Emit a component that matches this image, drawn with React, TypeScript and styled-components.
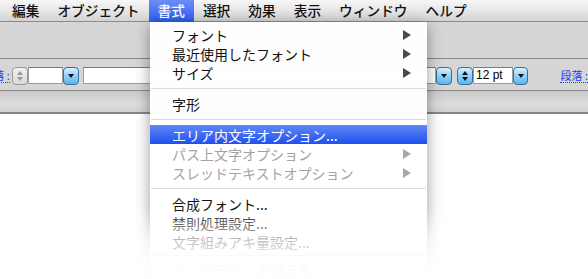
import React from 'react';
import styled, {createGlobalStyle} from "styled-components";

const GlobalStyle = createGlobalStyle`
    html, body {
        margin: 0;
        padding: 0;
        background: #ffffff;
    }
    body {
        font-family: "Noto Sans CJK JP", "Noto Sans", sans-serif;
    }
`

type Tone = "normal" | "disabled" | "active"

type MenuEntry = {
    label: string
    arrow?: boolean
    tone?: Tone
} | "sep" | "sep-short"

const menuBarItems = ["編集", "オブジェクト", "書式", "選択", "効果", "表示", "ウィンドウ", "ヘルプ"]

const typeMenu: MenuEntry[] = [
    {label: "フォント", arrow: true},
    {label: "最近使用したフォント", arrow: true},
    {label: "サイズ", arrow: true},
    "sep",
    {label: "字形"},
    "sep",
    {label: "エリア内文字オプション...", tone: "active"},
    {label: "パス上文字オプション", arrow: true, tone: "disabled"},
    {label: "スレッドテキストオプション", arrow: true, tone: "disabled"},
    "sep",
    {label: "合成フォント..."},
    {label: "禁則処理設定..."},
    {label: "文字組みアキ量設定..."},
    "sep-short",
    {label: "ヘッドラインを揃える"},
]

export default function App() {
    return (
        <Screen>
            <GlobalStyle/>
            <MenuBar>
                {menuBarItems.map(item => (
                    <MenuBarItem key={item} $open={item === "書式"}>{item}</MenuBarItem>
                ))}
            </MenuBar>
            <TopPanel/>
            <ControlRow>
                <ClippedLabel>
                    <LinkLabel>段落 :</LinkLabel>
                </ClippedLabel>
                <Stepper $active={false} $gap={2}><Up/><Down/></Stepper>
                <Field $width={36}/>
                <DropButton><Down/></DropButton>
                <Field $width={357} $gap={4}/>
                <DropButton><Down/></DropButton>
                <Stepper $active $gap={5}><Up/><Down/></Stepper>
                <Field $width={40}>12 pt</Field>
                <DropButton><Down/></DropButton>
                <LinkLabel $gap={32}>段落 :</LinkLabel>
            </ControlRow>
            <Band/>
            <Canvas/>

            <Dropdown>
                {typeMenu.map((entry, i) => {
                    if (entry === "sep") return <Separator key={i} $height={12}/>
                    if (entry === "sep-short") return <Separator key={i} $height={9}/>
                    const tone = entry.tone ?? "normal"
                    return (
                        <MenuRow key={i} $tone={tone}>
                            <span>{entry.label}</span>
                            {entry.arrow && <Arrow $tone={tone}/>}
                        </MenuRow>
                    )
                })}
            </Dropdown>
            <Fade/>
        </Screen>
    );
}

const Screen = styled.div`
    position: relative;
    width: 588px;
    height: 279px;
    overflow: hidden;
    background: #ffffff;
`

const MenuBar = styled.div`
    display: flex;
    height: 22px;
    padding-left: 3px;
    background: linear-gradient(#f7f7f7, #e6e6e6 50%, #d3d3d3);
    border-bottom: 1px solid #8c8c8c;
    box-sizing: border-box;
`

const MenuBarItem = styled.div<{ $open: boolean }>`
    padding: 0 9px;
    height: 22px;
    line-height: 21px;
    font-size: 13.7px;
    font-weight: 500;
    color: ${p => p.$open ? "#ffffff" : "#111111"};
    background: ${p => p.$open ? "linear-gradient(#6a8ff7, #2a5bf0)" : "transparent"};
`

const TopPanel = styled.div`
    height: 36px;
    background: #d6d6d6;
    border-bottom: 1px solid #8a8a8a;
`

const ControlRow = styled.div`
    display: flex;
    align-items: center;
    height: 32px;
    padding-top: 2px;
    box-sizing: border-box;
    background: #d6d6d6;
    border-bottom: 1px solid #8a8a8a;
`

const ClippedLabel = styled.div`
    display: flex;
    justify-content: flex-end;
    width: 10px;
    overflow: hidden;
`

const LinkLabel = styled.span<{ $gap?: number }>`
    flex: none;
    font-size: 11px;
    color: #1f3ff0;
    border-bottom: 1px dotted #1f3ff0;
    line-height: 13px;
    margin-left: ${p => p.$gap ?? 0}px;
    white-space: nowrap;
`

const Stepper = styled.div<{ $active: boolean, $gap?: number }>`
    display: flex;
    flex-direction: column;
    align-items: center;
    justify-content: center;
    gap: 2px;
    width: 16px;
    height: 18px;
    margin-left: ${p => p.$gap ?? 0}px;
    box-sizing: border-box;
    border: 1px solid ${p => p.$active ? "#3d6b9c" : "#9a9a9a"};
    border-radius: 4px;
    background: ${p => p.$active
            ? "linear-gradient(#d8f1ff, #8fd0f7 50%, #5bb6ee)"
            : "linear-gradient(#f2f2f2, #d9d9d9)"};
    color: ${p => p.$active ? "#111111" : "#9a9a9a"};
`

const Up = styled.span`
    width: 0;
    height: 0;
    border-left: 3px solid transparent;
    border-right: 3px solid transparent;
    border-bottom: 4px solid currentColor;
`

const Down = styled.span`
    width: 0;
    height: 0;
    border-left: 3px solid transparent;
    border-right: 3px solid transparent;
    border-top: 4px solid currentColor;
`

const Field = styled.div<{ $width: number, $gap?: number }>`
    width: ${p => p.$width}px;
    height: 17px;
    margin-left: ${p => p.$gap ?? 0}px;
    box-sizing: border-box;
    background: #ffffff;
    border: 1px solid #9c9c9c;
    border-top-color: #7a7a7a;
    font-family: "Liberation Sans", Arial, sans-serif;
    font-size: 12px;
    line-height: 15px;
    padding-left: 2px;
    color: #000000;
`

const DropButton = styled.div`
    display: flex;
    align-items: center;
    justify-content: center;
    width: 16px;
    height: 18px;
    box-sizing: border-box;
    border: 1px solid #3d6b9c;
    border-radius: 4px;
    background: linear-gradient(#d8f1ff, #8fd0f7 50%, #5bb6ee);
    color: #111111;
`

const Band = styled.div`
    height: 21px;
    background: linear-gradient(#c9c9c9, #dcdcdc 60%, #d2d2d2);
    border-bottom: 2px solid #858585;
`

const Canvas = styled.div`
    height: 200px;
    background: #ffffff;
`

const Dropdown = styled.div`
    position: absolute;
    top: 22px;
    left: 150px;
    width: 277px;
    padding-top: 3px;
    padding-bottom: 20px;
    background: rgba(255, 255, 255, 0.97);
    box-shadow: 0 4px 14px rgba(0, 0, 0, 0.4);
`

const MenuRow = styled.div<{ $tone: Tone }>`
    display: flex;
    align-items: center;
    justify-content: space-between;
    height: 19px;
    padding: 0 16px 0 22px;
    font-size: 14px;
    color: ${p => p.$tone === "active" ? "#ffffff" : p.$tone === "disabled" ? "#a3a3a3" : "#111111"};
    background: ${p => p.$tone === "active" ? "linear-gradient(#6288f6, #1f50ef)" : "transparent"};
`

const Arrow = styled.span<{ $tone: Tone }>`
    width: 0;
    height: 0;
    border-top: 5px solid transparent;
    border-bottom: 5px solid transparent;
    border-left: 8px solid ${p => p.$tone === "disabled" ? "#a8a8a8" : "#4a4a4a"};
`

const Separator = styled.div<{ $height: number }>`
    height: ${p => p.$height}px;
    display: flex;
    align-items: center;

    &::after {
        content: "";
        flex: 1;
        height: 1px;
        margin: 0 1px;
        background: #dcdcdc;
    }
`

const Fade = styled.div`
    position: absolute;
    left: 0;
    right: 0;
    top: 208px;
    bottom: 0;
    background: linear-gradient(
            rgba(255, 255, 255, 0),
            rgba(255, 255, 255, 0.3) 18%,
            rgba(255, 255, 255, 0.74) 46%,
            rgba(255, 255, 255, 0.985) 86%
    );
`
